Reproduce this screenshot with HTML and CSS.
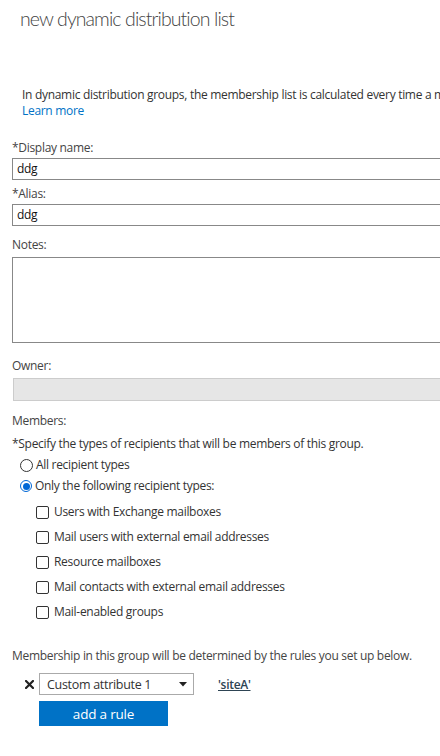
FILE: index.html
```html
<!DOCTYPE html>
<html>
<head>
<meta charset="utf-8">
<link rel="stylesheet" href="styles.css">
</head>
<body>
<div class="page">
  <h1 class="title">new dynamic distribution list</h1>
  <div class="intro">
    <p class="intro-text">In dynamic distribution groups, the membership list is calculated every time a message is sent to the group, based on the filters and conditions that you define.</p>
    <a class="learn" href="#">Learn more</a>
  </div>
  <div class="form">
    <div class="label label-first">*Display name:</div>
    <div class="input">ddg</div>
    <div class="label">*Alias:</div>
    <div class="input">ddg</div>
    <div class="label label-notes">Notes:</div>
    <div class="textarea"></div>
    <div class="label label-owner">Owner:</div>
    <div class="owner"></div>
    <div class="label label-members">Members:</div>
    <div class="specify">*Specify the types of recipients that will be members of this group.</div>
    <div class="radios">
      <div class="radio-row"><span class="radio"></span><span>All recipient types</span></div>
      <div class="radio-row"><span class="radio radio-on"><span class="dot"></span></span><span>Only the following recipient types:</span></div>
    </div>
    <div class="checks">
      <div class="check-row"><span class="box"></span><span>Users with Exchange mailboxes</span></div>
      <div class="check-row"><span class="box"></span><span>Mail users with external email addresses</span></div>
      <div class="check-row"><span class="box"></span><span>Resource mailboxes</span></div>
      <div class="check-row"><span class="box"></span><span>Mail contacts with external email addresses</span></div>
      <div class="check-row"><span class="box"></span><span>Mail-enabled groups</span></div>
    </div>
    <div class="membership">Membership in this group will be determined by the rules you set up below.</div>
    <div class="rule-row">
      <svg class="remove" width="9" height="9" viewBox="0 0 9 9"><path d="M1 1 L8 8 M8 1 L1 8" stroke="#222" stroke-width="2.2" stroke-linecap="square"/></svg>
      <div class="select"><span>Custom attribute 1</span><svg class="caret" width="8" height="5" viewBox="0 0 8 5"><path d="M0 0 H8 L4 4.5 Z" fill="#222"/></svg></div>
      <a class="value" href="#">'siteA'</a>
    </div>
    <div class="btn-row"><button class="btn">add a rule</button></div>
  </div>
</div>
</body>
</html>
```
FILE: styles.css
```css
html, body {
  margin: 0;
  padding: 0;
  background: #ffffff;
  overflow: hidden;
}
.page {
  width: 640px;
  font-family: "Open Sans", "Noto Sans", sans-serif;
  font-size: 12px;
  letter-spacing: -0.3px;
  color: #444444;
}
.title {
  margin: 0;
  padding: 5px 0 0 20px;
  font-family: Lato, "Open Sans", sans-serif;
  font-size: 19.5px;
  line-height: 28px;
  font-weight: 300;
  letter-spacing: -0.9px;
  color: #444444;
}
.intro {
  margin-top: 54px;
  padding-left: 22px;
}
.intro-text {
  margin: 0;
  white-space: nowrap;
  font-size: 12px;
  line-height: 16px;
  color: #333333;
}
.learn {
  display: block;
  font-size: 12px;
  line-height: 16px;
  color: #0072c6;
  text-decoration: none;
}
.form {
  padding-left: 12px;
}
.label {
  line-height: 16px;
  margin-top: 6px;
  margin-bottom: 2px;
  color: #444444;
}
.label-first { margin-top: 21px; }
.label-notes { margin-top: 11px; margin-bottom: 4px; }
.label-owner { margin-top: 15px; margin-bottom: 4px; }
.label-members { margin-top: 12px; margin-bottom: 7px; }
.input {
  width: 600px;
  height: 20px;
  border: 1px solid #888888;
  padding-left: 4px;
  line-height: 20px;
  font-size: 12px;
  color: #111111;
  box-sizing: content-box;
}
.textarea {
  width: 604px;
  height: 84px;
  border: 1px solid #888888;
}
.owner {
  width: 603px;
  height: 21px;
  margin-left: 1px;
  border: 1px solid #cccccc;
  background: #e6e6e6;
}
.specify {
  line-height: 16px;
  color: #333333;
}
.radios {
  margin-top: 5px;
  padding-left: 8px;
  display: flex;
  flex-direction: column;
  gap: 5px;
}
.radio-row, .check-row {
  display: flex;
  align-items: center;
  height: 16px;
  line-height: 16px;
  color: #333333;
}
.radio {
  width: 11px;
  height: 11px;
  border: 1px solid #333333;
  border-radius: 50%;
  margin-right: 3px;
  display: flex;
  align-items: center;
  justify-content: center;
  flex: none;
}
.radio-on {
  border-color: #0067d6;
  border-width: 1.5px;
  width: 10px;
  height: 10px;
}
.dot {
  width: 7px;
  height: 7px;
  border-radius: 50%;
  background: #0067d6;
}
.checks {
  margin-top: 10px;
  padding-left: 24px;
  display: flex;
  flex-direction: column;
  gap: 9px;
}
.box {
  width: 11px;
  height: 11px;
  border: 1px solid #333333;
  border-radius: 2px;
  margin-right: 5px;
  flex: none;
}
.membership {
  margin-top: 28px;
  line-height: 16px;
  color: #444444;
}
.rule-row {
  display: flex;
  align-items: center;
  margin-top: 9px;
  height: 22px;
}
.remove {
  margin-left: 13px;
  margin-right: 5px;
}
.select {
  height: 20px;
  border: 1px solid #aaaaaa;
  display: flex;
  align-items: center;
  justify-content: space-between;
  padding: 0 6px 0 7px;
  box-sizing: content-box;
  width: 140px;
  font-size: 12.5px;
  color: #333333;
}
.value {
  margin-left: 24px;
  color: #2e4453;
  font-weight: 600;
  font-size: 12px;
  text-decoration: underline;
}
.btn-row {
  padding-left: 27px;
  margin-top: 6px;
}
.btn {
  width: 129px;
  height: 25px;
  border: none;
  background: #0072c6;
  color: #ffffff;
  font-family: "Open Sans", "Noto Sans", sans-serif;
  font-size: 13.5px;
  letter-spacing: -0.2px;
  padding: 0;
  display: block;
}
```
